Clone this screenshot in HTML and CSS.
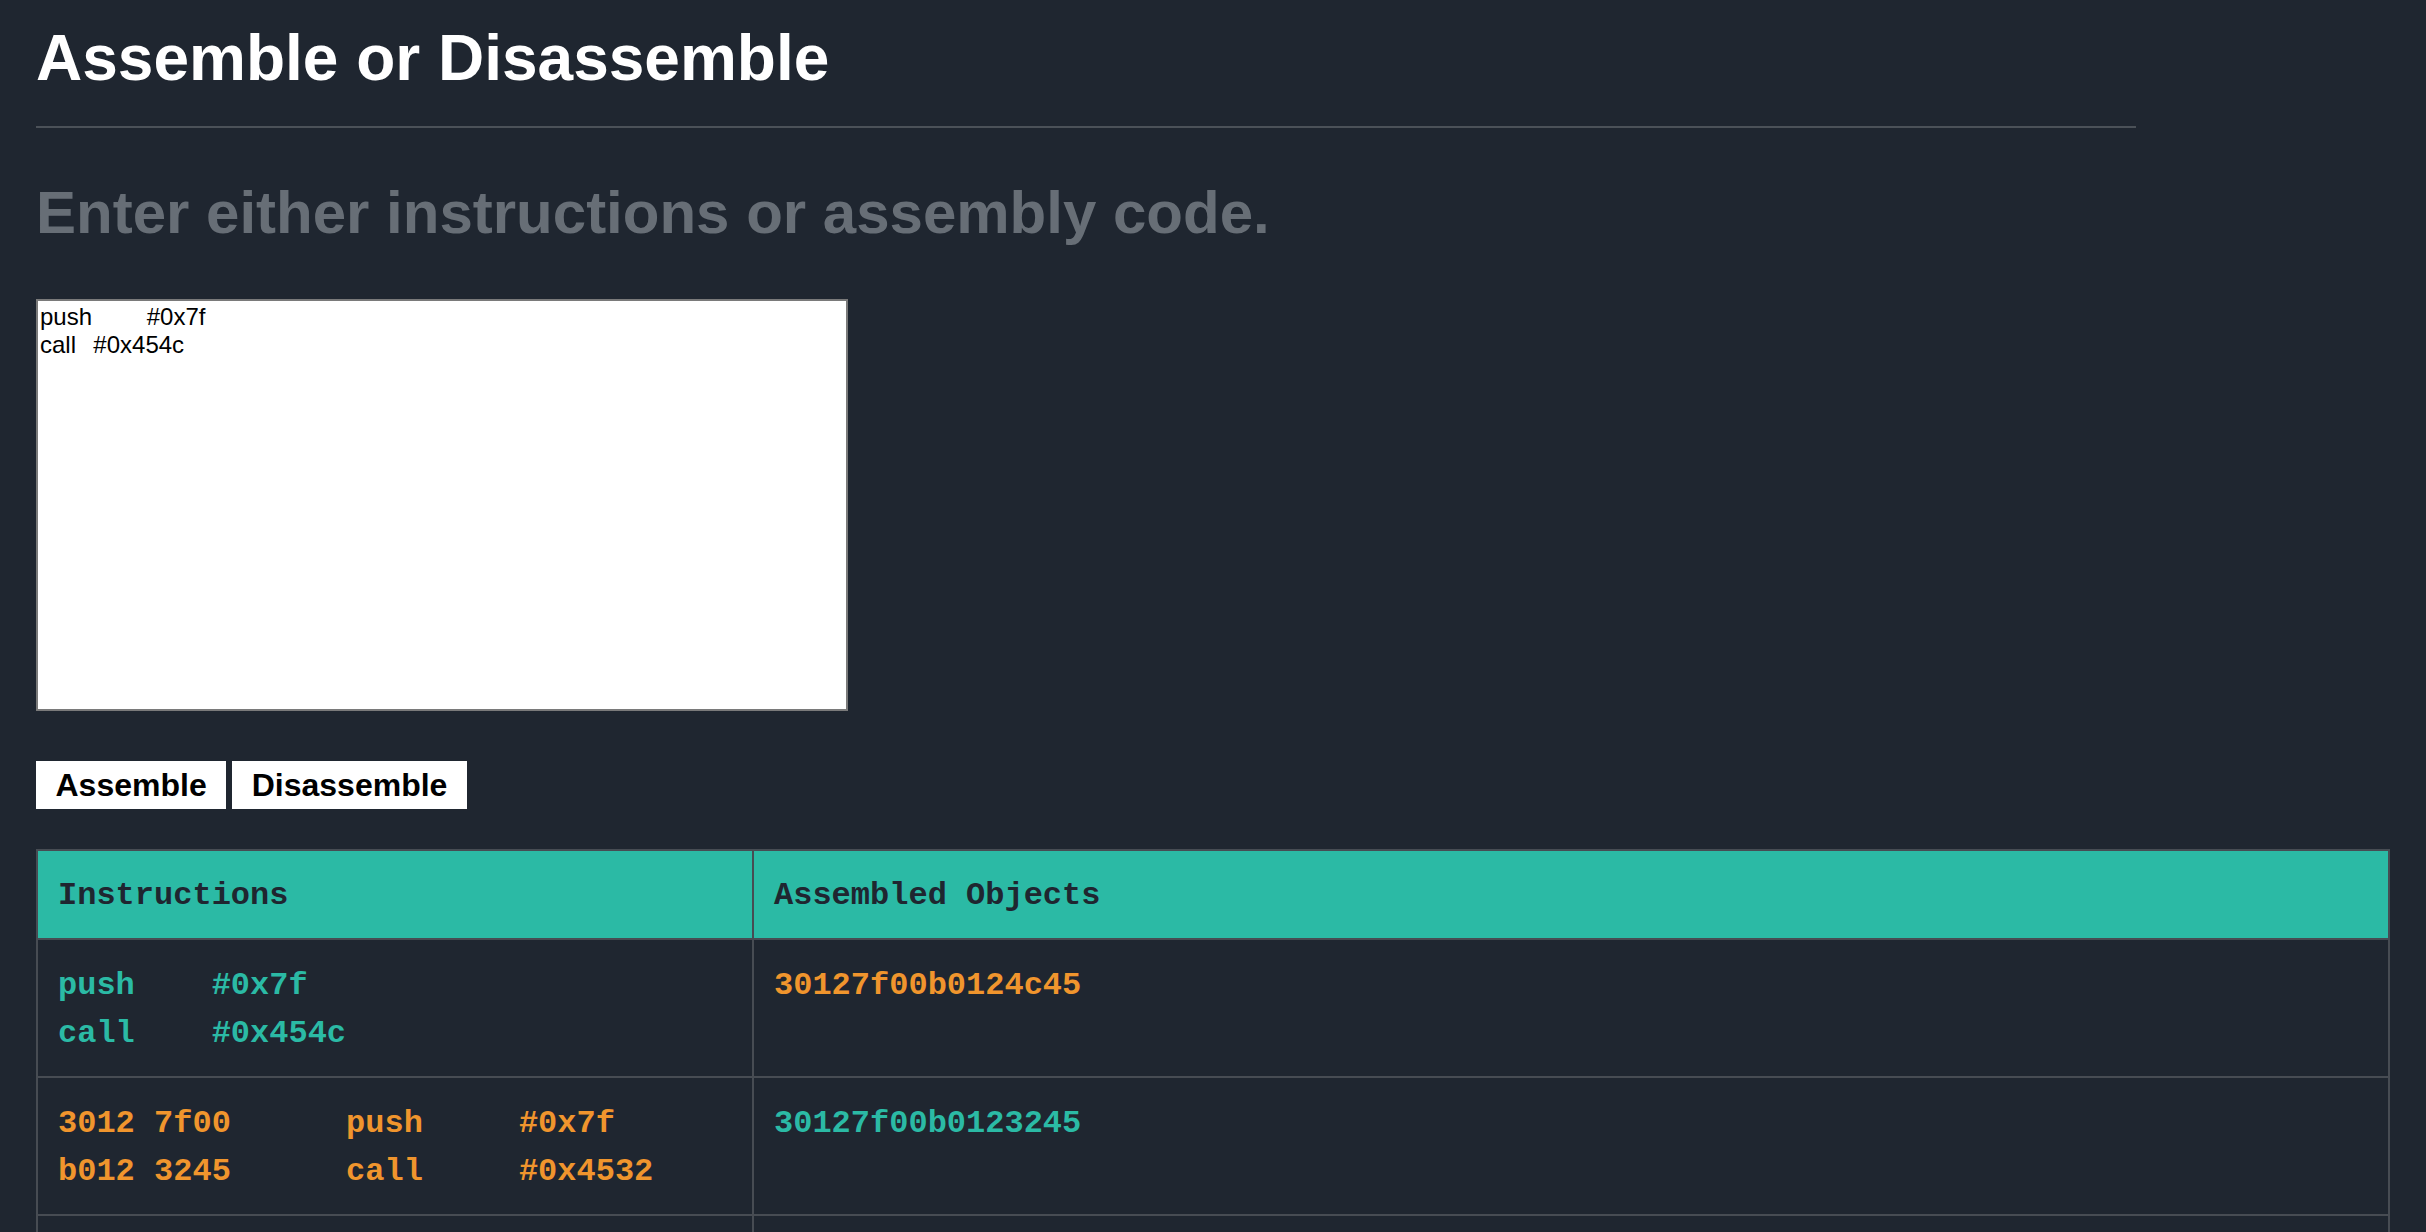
FILE: index.html
```
<!DOCTYPE html>
<html lang="en">
<head>
<meta charset="utf-8">
<title>Assemble or Disassemble</title>
<link rel="stylesheet" href="styles.css">
</head>
<body>
<main class="page">
  <h1 class="title">Assemble or Disassemble</h1>
  <hr class="rule">
  <h2 class="subtitle">Enter either instructions or assembly code.</h2>
  <textarea class="input" spellcheck="false">push&#9;#0x7f
call&#9;#0x454c</textarea>
  <div class="actions">
    <button class="btn" type="button">Assemble</button>
    <button class="btn" type="button">Disassemble</button>
  </div>
  <table class="results">
    <thead>
      <tr>
        <th class="col-a">Instructions</th>
        <th class="col-b">Assembled Objects</th>
      </tr>
    </thead>
    <tbody>
      <tr>
        <td class="col-a teal"><div class="line">push&#9;#0x7f</div><div class="line">call&#9;#0x454c</div></td>
        <td class="col-b orange"><div class="line">30127f00b0124c45</div></td>
      </tr>
      <tr>
        <td class="col-a orange"><div class="line">3012 7f00      push&#9;#0x7f</div><div class="line">b012 3245      call&#9;#0x4532</div></td>
        <td class="col-b teal"><div class="line">30127f00b0123245</div></td>
      </tr>
      <tr>
        <td class="col-a teal"><div class="line"></div><div class="line"></div></td>
        <td class="col-b orange"><div class="line"></div></td>
      </tr>
    </tbody>
  </table>
</main>
</body>
</html>
```
FILE: styles.css
```
html, body {
  margin: 0;
  padding: 0;
  background: #1f2630;
}

.page {
  padding: 21px 36px 40px;
  font-family: "Liberation Sans", Arial, sans-serif;
}

.title {
  margin: 0;
  font-size: 64px;
  line-height: normal;
  font-weight: bold;
  color: #ffffff;
}

.rule {
  margin: 31px 0 0;
  width: 2100px;
  height: 0;
  border: 0;
  border-top: 2px solid #4b5158;
}

.subtitle {
  margin: 50px 0 0;
  font-size: 60px;
  line-height: normal;
  font-weight: bold;
  color: #676e76;
}

.input {
  display: block;
  box-sizing: border-box;
  margin: 52px 0 0;
  width: 812px;
  height: 412px;
  padding: 2px;
  border: 2px solid #7a7a7a;
  background: #ffffff;
  color: #000000;
  font-family: "Liberation Sans", Arial, sans-serif;
  font-size: 24px;
  line-height: normal;
  tab-size: 8;
  resize: none;
  outline: none;
}

.actions {
  display: flex;
  gap: 6px;
  margin-top: 50px;
}

.btn {
  height: 48px;
  padding: 0 19.5px;
  border: 0;
  background: #ffffff;
  color: #000000;
  font-family: "Liberation Sans", Arial, sans-serif;
  font-size: 32px;
  font-weight: bold;
  line-height: 48px;
}

.results {
  margin-top: 40px;
  width: 100%;
  table-layout: fixed;
  border-collapse: separate;
  border-spacing: 0;
  border: 2px solid #474c53;
  font-family: "Liberation Mono", "Courier New", monospace;
  font-size: 32px;
  font-weight: bold;
  line-height: 48px;
}

.results th,
.results td {
  box-sizing: border-box;
  padding: 22px 20px 18px;
  text-align: left;
  vertical-align: top;
}

.results th {
  background: #2bbaa5;
  color: #1f2630;
  padding: 21px 20px 18px;
}

.results td {
  border-top: 2px solid #474c53;
}

.results .col-a {
  width: 716px;
  border-right: 2px solid #474c53;
}

.line {
  min-height: 48px;
  white-space: pre;
  tab-size: 8;
}

.teal {
  color: #2bbaa5;
}

.orange {
  color: #f0952d;
}
```
